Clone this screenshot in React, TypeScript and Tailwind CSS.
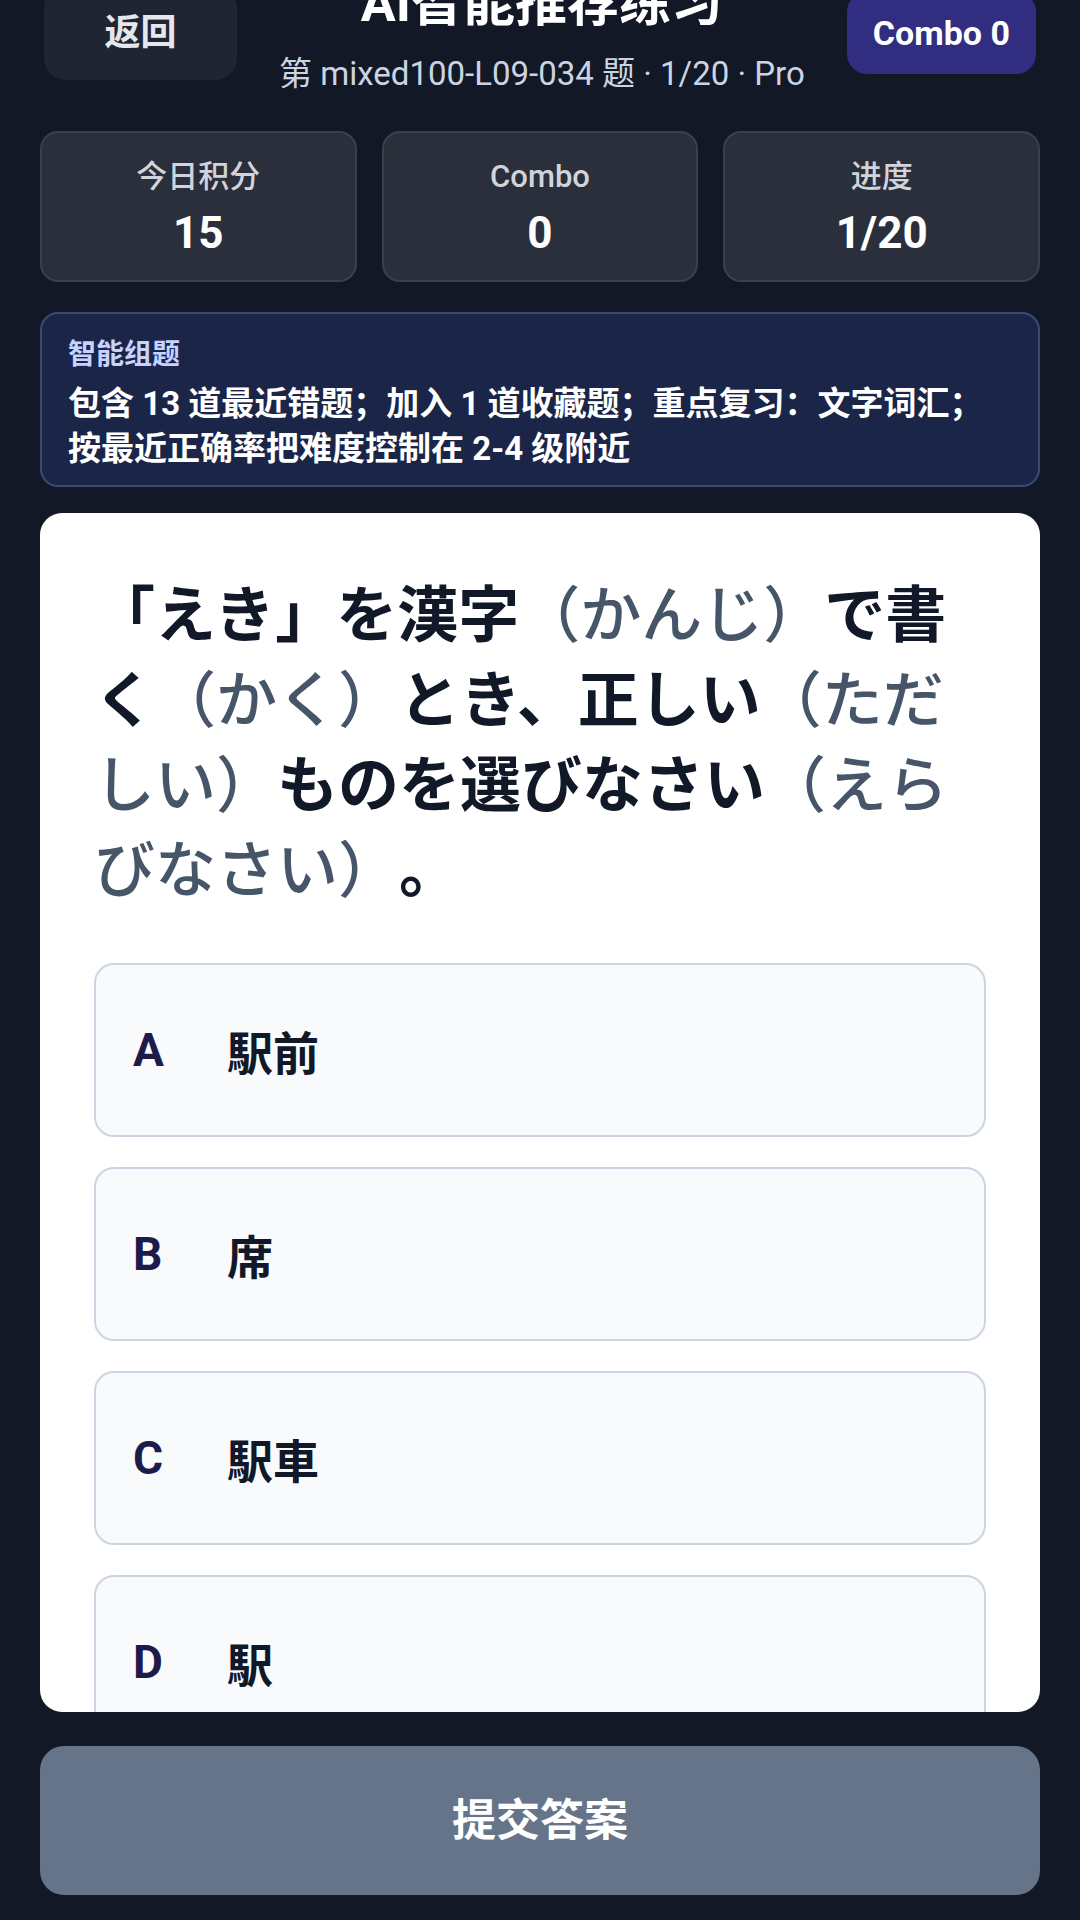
import React from "react";

const stats = [
  { label: "今日积分", value: "15" },
  { label: "Combo", value: "0" },
  { label: "进度", value: "1/20" },
];

const options = [
  { key: "A", text: "駅前" },
  { key: "B", text: "席" },
  { key: "C", text: "駅車" },
  { key: "D", text: "駅" },
];

function App() {
  return (
    <div
      className="h-[1920px] w-full overflow-hidden bg-[#121826] text-white"
      style={{ fontFamily: 'Roboto, "Noto Sans CJK SC", sans-serif' }}
    >
      {/* header */}
      <div className="-mt-[27px] flex h-[120px] items-center justify-between px-[44px]">
        <button className="flex h-[94px] w-[193px] items-center justify-center rounded-[22px] bg-[#1f2532] text-[36px] font-semibold text-[#e5e7eb]">
          返回
        </button>
        <div className="flex flex-col items-center">
          <div className="text-[52px] font-bold leading-[62px] text-white">AI智能推荐练习</div>
          <div className="mt-[19px] text-[33px] leading-[40px] text-[#cbd5e1]">
            第 mixed100-L09-034 题 · 1/20 · Pro
          </div>
        </div>
        <div className="flex h-[82px] items-center rounded-[20px] bg-[#312e81] px-[26px] text-[34px] font-bold text-white">
          Combo 0
        </div>
      </div>

      {/* stats */}
      <div className="mt-[38px] grid grid-cols-3 gap-[25px] px-10">
        {stats.map((s) => (
          <div
            key={s.label}
            className="flex h-[151px] flex-col items-center rounded-[18px] border-2 border-[#3a404c] bg-[#2a2f3b] pt-[24px]"
          >
            <div className="text-[31px] font-medium leading-[40px] text-[#d1d5db]">{s.label}</div>
            <div className="mt-[10px] text-[44px] font-bold leading-[52px] text-white">{s.value}</div>
          </div>
        ))}
      </div>

      {/* smart set */}
      <div className="mx-10 mt-[30px] h-[175px] rounded-[18px] border-2 border-[#3b4a74] bg-[#1b2548] px-[26px] pt-[23px]">
        <div className="text-[28px] font-semibold leading-[36px] text-[#c7d2fe]">智能组题</div>
        <div className="mt-[8px] text-[33px] font-bold leading-[45px] text-white">
          包含 13 道最近错题；加入 1 道收藏题；重点复习：文字词汇；
          <br />
          按最近正确率把难度控制在 2-4 级附近
        </div>
      </div>

      {/* question card */}
      <div className="mx-10 mt-[26px] h-[1199px] overflow-hidden rounded-[22px] bg-white px-[54px] pt-[55px]">
        <p
          lang="ja"
          className="text-[61px] font-bold leading-[85px] text-[#111827] [text-spacing-trim:space-all]"
          style={{ fontFamily: '"Noto Sans CJK JP", sans-serif' }}
        >
          「えき」を漢字<span className="font-medium text-[#475569]">（かんじ）</span>で書く
          <span className="font-medium text-[#475569]">（かく）</span>とき、正しい
          <span className="font-medium text-[#475569]">（ただしい）</span>ものを選びなさい
          <span className="font-medium text-[#475569]">（えらびなさい）</span>。
        </p>

        <div className="mt-[55px] flex flex-col gap-[30px]">
          {options.map((o) => (
            <div
              key={o.key}
              className="flex h-[174px] shrink-0 items-center rounded-[20px] border-2 border-[#cbd5e1] bg-[#f8fafc] pl-[37px]"
            >
              <span className="w-[94px] text-[46px] font-bold text-[#1e1b4b]">{o.key}</span>
              <span
                lang="ja"
                className="text-[46px] font-bold text-[#111827]"
                style={{ fontFamily: '"Noto Sans CJK JP", sans-serif' }}
              >
                {o.text}
              </span>
            </div>
          ))}
        </div>
      </div>

      {/* submit */}
      <div className="px-10">
        <button className="mt-[34px] flex h-[149px] w-full items-center justify-center rounded-[24px] bg-[#66748a] text-[44px] font-bold text-white">
          提交答案
        </button>
      </div>
    </div>
  );
}

export default App;
